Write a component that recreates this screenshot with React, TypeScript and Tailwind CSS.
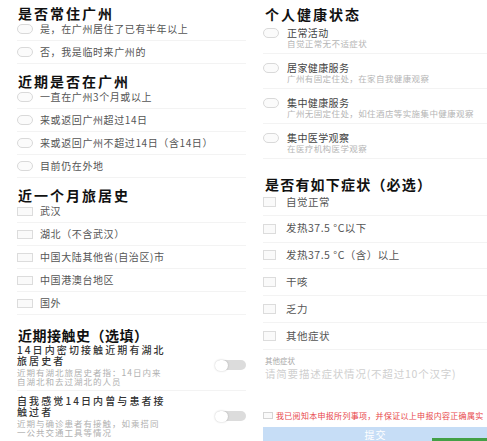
import React from 'react';

const font = "font-['Noto_Sans_CJK_SC','Noto_Sans',sans-serif]";

function Circle() {
  return <span className="w-[16px] h-[10px] shrink-0 rounded-full border border-[#d9d9d9] bg-[#fbfbfb]" />;
}

function Box({ small }: { small?: boolean }) {
  return (
    <span
      className={
        small
          ? 'w-[13px] h-[10px] shrink-0 border border-[#dcdcdc] bg-[#fafafa]'
          : 'w-[16px] h-[9px] shrink-0 border border-[#dcdcdc] bg-[#fafafa]'
      }
    />
  );
}

function Title({ children, className = '' }: { children: React.ReactNode; className?: string }) {
  return (
    <div className={`h-[10px] flex items-center pl-[1px] text-[14px] font-bold text-[#111] whitespace-nowrap ${className}`}>
      {children}
    </div>
  );
}

function RadioRow({ label }: { label: string }) {
  return (
    <div className="h-[23px] flex items-center border-b border-[#f3f3f3]">
      <Circle />
      <span className="ml-[7px] text-[10px] leading-none tracking-[0.6px] text-[#555] whitespace-nowrap">{label}</span>
    </div>
  );
}

function CheckRow({ label }: { label: string }) {
  return (
    <div className="h-[23px] flex items-center border-b border-[#f3f3f3]">
      <Box />
      <span className="ml-[7px] text-[10px] leading-none tracking-[0.6px] text-[#555] whitespace-nowrap">{label}</span>
    </div>
  );
}

function Toggle() {
  return (
    <div className="w-[30px] h-[10px] shrink-0 rounded-full bg-[#dcdcdc] flex items-center">
      <span className="w-[13px] h-[11px] -ml-[1px] rounded-full bg-white shadow-[0_0_2px_rgba(0,0,0,0.25)]" />
    </div>
  );
}

function ContactItem({ title, desc }: { title: React.ReactNode; desc: React.ReactNode }) {
  return (
    <div className="flex items-center pt-[4px] pb-[4px] border-b border-[#f3f3f3]">
      <div className="w-[165px]">
        <div className="text-[10px] leading-[11px] tracking-[2.1px] font-medium text-[#333] whitespace-nowrap">{title}</div>
        <div className="mt-[2px] text-[8.5px] leading-[9px] tracking-[1px] text-[#b0b0b0] whitespace-nowrap">{desc}</div>
      </div>
      <div className="ml-auto">
        <Toggle />
      </div>
    </div>
  );
}

function StatusRow({ label, sub }: { label: string; sub: string }) {
  return (
    <div className="pt-[9px] pb-[5px] border-b border-[#f3f3f3]">
      <div className="h-[10px] flex items-center">
        <Circle />
        <span className="ml-[8px] text-[10px] leading-none tracking-[0.4px] text-[#444] whitespace-nowrap">{label}</span>
      </div>
      <div className="h-[10px] flex items-center pl-[24px] text-[8.5px] leading-none tracking-[0.4px] text-[#b5b5b5] whitespace-nowrap">
        {sub}
      </div>
    </div>
  );
}

function SymptomRow({ label }: { label: string }) {
  return (
    <div className="h-[26.8px] flex items-center border-b border-[#f3f3f3]">
      <Box small />
      <span className="ml-[10px] text-[10.5px] leading-none tracking-[0.5px] text-[#555] whitespace-nowrap">{label}</span>
    </div>
  );
}

export default function App() {
  return (
    <div className={`relative w-[487px] h-[441px] overflow-hidden bg-white flex ${font}`}>
      {/* left phone */}
      <div className="w-[246px] shrink-0 pl-[17px] pt-[8px]">
        <Title className="tracking-[2px]">是否常住广州</Title>
        <RadioRow label="是，在广州居住了已有半年以上" />
        <RadioRow label="否，我是临时来广州的" />

        <Title className="mt-[12px] tracking-[2px]">近期是否在广州</Title>
        <RadioRow label="一直在广州3个月或以上" />
        <RadioRow label="来或返回广州超过14日" />
        <RadioRow label="来或返回广州不超过14日（含14日）" />
        <RadioRow label="目前仍在外地" />

        <Title className="mt-[12px] tracking-[2px]">近一个月旅居史</Title>
        <CheckRow label="武汉" />
        <CheckRow label="湖北（不含武汉）" />
        <CheckRow label="中国大陆其他省(自治区)市" />
        <CheckRow label="中国港澳台地区" />
        <CheckRow label="国外" />

        <Title className="mt-[15px] tracking-[0.5px]">近期接触史（选填）</Title>
        <ContactItem
          title={<>14日内密切接触近期有湖北<br />旅居史者</>}
          desc={<>近期有湖北旅居史者指：14日内来<br />自湖北和去过湖北的人员</>}
        />
        <ContactItem
          title={<>自我感觉14日内曾与患者接<br />触过者</>}
          desc={<>近期与确诊患者有接触，如乘搭同<br />一公共交通工具等情况</>}
        />
      </div>

      {/* right phone */}
      <div className="flex-1 pl-[17px] pt-[9px]">
        <Title className="pl-[2px] tracking-[2px]">个人健康状态</Title>
        <StatusRow label="正常活动" sub="自觉正常无不适症状" />
        <StatusRow label="居家健康服务" sub="广州有固定住处，在家自我健康观察" />
        <StatusRow label="集中健康服务" sub="广州无固定住处，如住酒店等实施集中健康观察" />
        <StatusRow label="集中医学观察" sub="在医疗机构医学观察" />

        <Title className="mt-[20px] pl-[2px] tracking-[1.2px]">是否有如下症状（必选）</Title>
        <SymptomRow label="自觉正常" />
        <SymptomRow label="发热37.5 °C以下" />
        <SymptomRow label="发热37.5 °C（含）以上" />
        <SymptomRow label="干咳" />
        <SymptomRow label="乏力" />
        <SymptomRow label="其他症状" />

        <div className="pt-[7px] pl-[2px]">
          <div className="h-[8px] flex items-center text-[7.5px] text-[#a8a8a8] whitespace-nowrap">其他症状</div>
          <div className="mt-[4px] h-[10px] flex items-center text-[10.5px] tracking-[0.8px] text-[#cfcfcf] whitespace-nowrap">
            请简要描述症状情况(不超过10个汉字)
          </div>
        </div>

        <div className="mt-[33px] h-[8px] flex items-center">
          <span className="w-[10px] h-[7px] shrink-0 border border-[#d5d5d5] bg-[#fafafa]" />
          <span className="ml-[3px] text-[8px] leading-none tracking-[0.3px] text-[#e8474a] whitespace-nowrap">
            我已阅知本申报所列事项，并保证以上申报内容正确属实
          </span>
        </div>

        <div className="mt-[7px] -mr-[1px] h-[24px] pt-[2px] bg-[#c6ddf6] flex items-start justify-center text-[10px] leading-[12px] tracking-[1px] text-white">
          提交
        </div>
      </div>

      <div className="absolute right-0 bottom-0 w-[55px] h-[3px] bg-[#43a047]" />
    </div>
  );
}
